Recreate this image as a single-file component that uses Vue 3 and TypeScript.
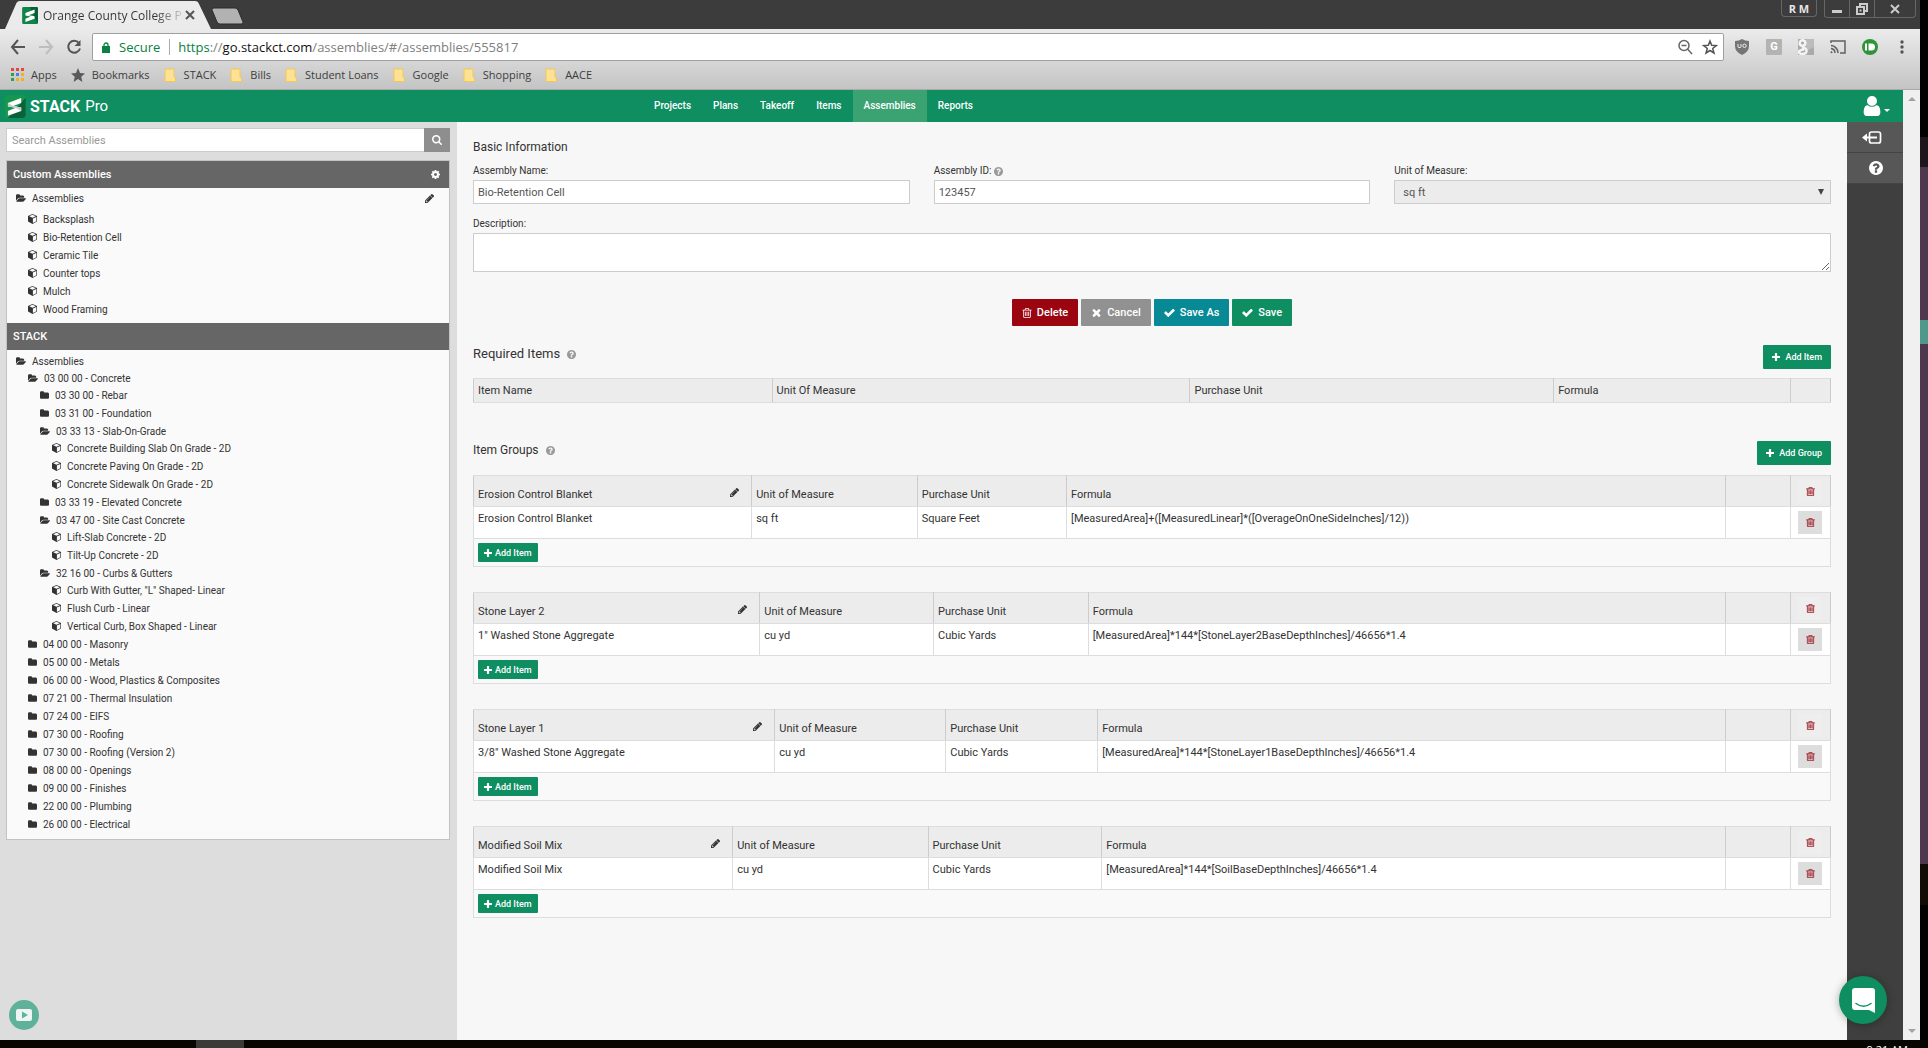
<script setup lang="ts">
import { h, ref } from 'vue'
import type { FunctionalComponent } from 'vue'

interface Glyph {
  box: string
  path: string
}

const glyphs: Record<string, Glyph> = {
  trash: {
    box: '192 128 1408 1536',
    path: 'M704 736v576q0 14-9 23t-23 9h-64q-14 0-23-9t-9-23v-576q0-14 9-23t23-9h64q14 0 23 9t9 23zm256 0v576q0 14-9 23t-23 9h-64q-14 0-23-9t-9-23v-576q0-14 9-23t23-9h64q14 0 23 9t9 23zm256 0v576q0 14-9 23t-23 9h-64q-14 0-23-9t-9-23v-576q0-14 9-23t23-9h64q14 0 23 9t9 23zm128 724v-948h-896v948q0 22 7 40.5t14.5 27 10.5 8.5h832q3 0 10.5-8.5t14.5-27 7-40.5zm-672-1076h448l-48-117q-7-9-17-11h-317q-10 2-17 11zm928 32v64q0 14-9 23t-23 9h-96v948q0 83-47 143.5t-113 60.5h-832q-66 0-113-58.5t-47-141.5v-952h-96q-14 0-23-9t-9-23v-64q0-14 9-23t23-9h309l70-167q15-37 54-63t79-26h320q40 0 79 26t54 63l70 167h309q14 0 23 9t9 23z'
  },
  folder: {
    box: '64 128 1664 1408',
    path: 'M1728 608v704q0 92-66 158t-158 66h-1216q-92 0-158-66t-66-158v-960q0-92 66-158t158-66h320q92 0 158 66t66 158v32h672q92 0 158 66t66 158z'
  },
  folderOpen: {
    box: '0 128 1880 1408',
    path: 'M1879 952q0 31-31 66l-336 396q-43 51-120.5 86.5t-143.5 35.5h-1088q-34 0-60.5-13t-26.5-43q0-31 31-66l336-396q43-51 120.5-86.5t143.5-35.5h1088q34 0 60.5 13t26.5 43zm-343-344v160h-832q-94 0-197 47.5t-164 119.5l-337 396-5 6q0-4-.5-12.5t-.5-12.5v-960q0-92 66-158t158-66h320q92 0 158 66t66 158v32h544q92 0 158 66t66 158z'
  },
  check: {
    box: '121 200 1550 1330',
    path: 'M1671 566q0 40-28 68l-724 724-136 136q-28 28-68 28t-68-28l-136-136-362-362q-28-28-28-68t28-68l136-136q28-28 68-28t68 28l294 295 656-657q28-28 68-28t68 28l136 136q28 28 28 68z'
  },
  times: {
    box: '302 366 1188 1188',
    path: 'M1490 1322q0 40-28 68l-136 136q-28 28-68 28t-68-28l-294-294-294 294q-28 28-68 28t-68-28l-136-136q-28-28-28-68t28-68l294-294-294-294q-28-28-28-68t28-68l136-136q28-28 68-28t68 28l294 294 294-294q28-28 68-28t68 28l136 136q28 28 28 68t-28 68l-294 294 294 294q28 28 28 68z'
  },
  plus: {
    box: '192 128 1408 1408',
    path: 'M1600 736v192q0 40-28 68t-68 28h-416v416q0 40-28 68t-68 28h-192q-40 0-68-28t-28-68v-416h-416q-40 0-68-28t-28-68v-192q0-40 28-68t68-28h416v-416q0-40 28-68t68-28h192q40 0 68 28t28 68v416h416q40 0 68 28t28 68z'
  },
  help: {
    box: '128 128 1536 1536',
    path: 'M1024 1376v-192q0-14-9-23t-23-9h-192q-14 0-23 9t-9 23v192q0 14 9 23t23 9h192q14 0 23-9t9-23zm256-672q0-88-55.5-163t-138.5-116-170-41q-243 0-371 213-15 24 8 42l132 100q7 6 19 6 16 0 25-12 53-68 86-92 34-24 86-24 48 0 85.5 26t37.5 59q0 38-20 61t-68 45q-63 28-115.5 86.5t-52.5 125.5v36q0 14 9 23t23 9h192q14 0 23-9t9-23q0-19 21.5-49.5t54.5-49.5q32-18 49-28.5t46-35 44.5-48 28-60.5 12.5-81zm384 192q0 209-103 385.5t-279.5 279.5-385.5 103-385.5-103-279.5-279.5-103-385.5 103-385.5 279.5-279.5 385.5-103 385.5 103 279.5 279.5 103 385.5z'
  },
  search: {
    box: '64 128 1664 1664',
    path: 'M1216 832q0-185-131.5-316.5t-316.5-131.5-316.5 131.5-131.5 316.5 131.5 316.5 316.5 131.5 316.5-131.5 131.5-316.5zm512 832q0 52-38 90t-90 38q-54 0-90-38l-343-342q-179 124-399 124-143 0-273.5-55.5t-225-150-150-225-55.5-273.5 55.5-273.5 150-225 225-150 273.5-55.5 273.5 55.5 225 150 150 225 55.5 273.5q0 220-124 399l343 343q37 37 37 90z'
  },
  pencil: {
    box: '128 149 1515 1515',
    path: 'M491 1536l91-91-235-235-91 91v107h128v128h107zm523-928q0-22-22-22-10 0-17 7l-542 542q-7 7-7 17 0 22 22 22 10 0 17-7l542-542q7-7 7-17zm-54-192l416 416-832 832h-416v-416zm683 96q0 53-37 90l-166 166-416-416 166-165q36-38 90-38 53 0 91 38l235 234q37 39 37 91z'
  },
  cog: {
    box: '128 128 1536 1536',
    path: 'M1152 896q0-106-75-181t-181-75-181 75-75 181 75 181 181 75 181-75 75-181zm512-109v222q0 12-8 23t-20 13l-185 28q-19 54-39 91 35 50 107 138 10 12 10 25t-9 23q-27 37-99 108t-94 71q-12 0-26-9l-138-108q-44 23-91 38-16 136-29 186-7 28-36 28h-222q-14 0-24.5-8.5t-11.5-21.5l-28-184q-49-16-90-37l-141 107q-10 9-25 9-14 0-25-11-126-114-165-168-7-10-7-23 0-12 8-23 15-21 51-66.5t54-70.5q-27-50-41-99l-183-27q-13-2-21-12.5t-8-23.5v-222q0-12 8-23t19-13l186-28q14-46 39-92-40-57-107-138-10-12-10-24 0-10 9-23 26-36 98.5-107.5t94.5-71.5q13 0 26 10l138 107q44-23 91-38 16-136 29-186 7-28 36-28h222q14 0 24.5 8.5t11.5 21.5l28 184q49 16 90 37l142-107q9-9 24-9 13 0 25 10 129 119 165 170 7 8 7 22 0 12-8 23-15 21-51 66.5t-54 70.5q26 50 41 98l183 28q13 2 21 12.5t8 23.5z'
  },
  user: {
    box: '256 128 1280 1536',
    path: 'M1536 1399q0 109-62.5 187t-150.5 78h-854q-88 0-150.5-78t-62.5-187q0-85 8.5-160.5t31.5-152 58.5-131 94-89 134.5-34.5q131 128 313 128t313-128q76 0 134.5 34.5t94 89 58.5 131 31.5 152 8.5 160.5zm-256-887q0 159-112.5 271.5t-271.5 112.5-271.5-112.5-112.5-271.5 112.5-271.5 271.5-112.5 271.5 112.5 112.5 271.5z'
  },
  cube: {
    box: '0 0 18 20',
    path: 'M9 0L18 4V15L9 20L0 15V4ZM9 1.500L2.500 4.500L9 7.500L15.500 4.500ZM9.800 9V18L16.700 14.300V6Z'
  }
}

const Icon: FunctionalComponent<{ name: string }> = (props) =>
  h('svg', { viewBox: glyphs[props.name].box, fill: 'currentColor', 'aria-hidden': 'true' }, [
    h('path', { d: glyphs[props.name].path, 'fill-rule': props.name === 'cube' ? 'evenodd' : 'nonzero' })
  ])
Icon.props = ['name']

const bookmarks = ['STACK', 'Bills', 'Student Loans', 'Google', 'Shopping', 'AACE']
const navItems = ['Projects', 'Plans', 'Takeoff', 'Items', 'Assemblies', 'Reports']
const current = ref('Assemblies')

const customAssemblies = ['Backsplash', 'Bio-Retention Cell', 'Ceramic Tile', 'Counter tops', 'Mulch', 'Wood Framing']

interface TreeRow {
  level: number
  icon: 'folder' | 'folderOpen' | 'cube'
  label: string
}

const open = (level: number, label: string): TreeRow => ({ level, icon: 'folderOpen', label })
const closed = (level: number, label: string): TreeRow => ({ level, icon: 'folder', label })
const leaf = (label: string): TreeRow => ({ level: 3, icon: 'cube', label })

const tree: TreeRow[] = [
  open(0, 'Assemblies'),
  open(1, '03 00 00 - Concrete'),
  closed(2, '03 30 00 - Rebar'),
  closed(2, '03 31 00 - Foundation'),
  open(2, '03 33 13 - Slab-On-Grade'),
  leaf('Concrete Building Slab On Grade - 2D'),
  leaf('Concrete Paving On Grade - 2D'),
  leaf('Concrete Sidewalk On Grade - 2D'),
  closed(2, '03 33 19 - Elevated Concrete'),
  open(2, '03 47 00 - Site Cast Concrete'),
  leaf('Lift-Slab Concrete - 2D'),
  leaf('Tilt-Up Concrete - 2D'),
  open(2, '32 16 00 - Curbs & Gutters'),
  leaf('Curb With Gutter, "L" Shaped- Linear'),
  leaf('Flush Curb - Linear'),
  leaf('Vertical Curb, Box Shaped - Linear'),
  closed(1, '04 00 00 - Masonry'),
  closed(1, '05 00 00 - Metals'),
  closed(1, '06 00 00 - Wood, Plastics & Composites'),
  closed(1, '07 21 00 - Thermal Insulation'),
  closed(1, '07 24 00 - EIFS'),
  closed(1, '07 30 00 - Roofing'),
  closed(1, '07 30 00 - Roofing (Version 2)'),
  closed(1, '08 00 00 - Openings'),
  closed(1, '09 00 00 - Finishes'),
  closed(1, '22 00 00 - Plumbing'),
  closed(1, '26 00 00 - Electrical')
]

const startsBranch = (i: number) => i > 0 && tree[i].level > tree[i - 1].level

interface Group {
  name: string
  item: string
  unit: string
  purchase: string
  formula: string
  shares: number[]
}

// shares: column widths as a percentage of the table, formula takes the rest
const groups: Group[] = [
  {
    name: 'Erosion Control Blanket',
    item: 'Erosion Control Blanket',
    unit: 'sq ft',
    purchase: 'Square Feet',
    formula: '[MeasuredArea]+([MeasuredLinear]*([OverageOnOneSideInches]/12))',
    shares: [20.5, 12.2, 11]
  },
  {
    name: 'Stone Layer 2',
    item: '1" Washed Stone Aggregate',
    unit: 'cu yd',
    purchase: 'Cubic Yards',
    formula: '[MeasuredArea]*144*[StoneLayer2BaseDepthInches]/46656*1.4',
    shares: [21.1, 12.8, 11.4]
  },
  {
    name: 'Stone Layer 1',
    item: '3/8" Washed Stone Aggregate',
    unit: 'cu yd',
    purchase: 'Cubic Yards',
    formula: '[MeasuredArea]*144*[StoneLayer1BaseDepthInches]/46656*1.4',
    shares: [22.2, 12.6, 11.2]
  },
  {
    name: 'Modified Soil Mix',
    item: 'Modified Soil Mix',
    unit: 'cu yd',
    purchase: 'Cubic Yards',
    formula: '[MeasuredArea]*144*[SoilBaseDepthInches]/46656*1.4',
    shares: [19.1, 14.4, 12.8]
  }
]

const assemblyName = ref('Bio-Retention Cell')
const assemblyId = ref('123457')
const description = ref('')
const query = ref('')
</script>

<template>
  <div class="desktop">
    <div class="browser">
      <div class="titlebar">
        <div class="tab">
          <svg class="tab-shape" viewBox="0 0 206 28" preserveAspectRatio="none" aria-hidden="true">
            <path d="M0 28L11 3Q12 0 15 0H190Q193 0 194 3L206 28Z" fill="#ebebeb" />
          </svg>
          <svg class="favicon" viewBox="0 0 24 26" aria-hidden="true">
            <rect width="24" height="26" rx="2" fill="#0e8446" />
            <path d="M12 0H22Q24 0 24 2V26Z" fill="#0a5c35" />
            <path d="M5 9L19 4V9L10 12.500L19 14V18L5 23V18L13 14.500L5 13Z" fill="#fff" />
          </svg>
          <span class="tab-title">Orange County College P</span>
          <button class="tab-close" type="button" aria-label="Close tab">
            <svg viewBox="0 0 10 10" aria-hidden="true"><path d="M1 1L9 9M9 1L1 9" stroke="#555" stroke-width="2" /></svg>
          </button>
        </div>
        <button class="new-tab" type="button" aria-label="New tab">
          <svg viewBox="0 0 34 18" aria-hidden="true">
            <path d="M3 1H24Q26 1 27 3L32 15Q33 17 30 17H9Q7 17 6 15L1 3Q0 1 3 1Z" fill="#b2b2b2" stroke="#2b2b2b" />
          </svg>
        </button>
        <div class="window-controls">
          <button class="wc profile" type="button">R M</button>
          <div class="wc-group">
            <button class="wc" type="button" aria-label="Minimize">
              <svg viewBox="0 0 12 12" aria-hidden="true"><rect x="1" y="7" width="10" height="3" fill="#ccc" /></svg>
            </button>
            <button class="wc" type="button" aria-label="Restore">
              <svg viewBox="0 0 12 12" fill="none" stroke="#ccc" stroke-width="2" aria-hidden="true">
                <path d="M4 3V1H11V8H9" /><rect x="1" y="4" width="7" height="7" /><rect x="4" y="7" width="1" height="1" stroke-width="1" />
              </svg>
            </button>
            <button class="wc wide" type="button" aria-label="Close">
              <svg viewBox="0 0 12 12" aria-hidden="true"><path d="M2 2L10 10M10 2L2 10" stroke="#ccc" stroke-width="2" /></svg>
            </button>
          </div>
        </div>
      </div>

      <div class="chrome">
        <div class="toolbar">
          <div class="history">
            <button type="button" aria-label="Back">
              <svg viewBox="0 0 16 16" fill="none" stroke="#555" stroke-width="2" aria-hidden="true"><path d="M15 8H2M8 1L2 8L8 15" /></svg>
            </button>
            <button type="button" aria-label="Forward">
              <svg viewBox="0 0 16 16" fill="none" stroke="#bdbdbd" stroke-width="2" aria-hidden="true"><path d="M1 8H14M8 1L14 8L8 15" /></svg>
            </button>
            <button type="button" aria-label="Reload">
              <svg viewBox="0 0 16 16" fill="none" stroke="#555" stroke-width="2" aria-hidden="true">
                <path d="M13 4A6 6 0 1 0 14 9.500" /><path d="M14.500 1V7H8.500Z" fill="#555" stroke="none" />
              </svg>
            </button>
          </div>
          <div class="address">
            <svg class="lock" viewBox="0 0 8 11" aria-hidden="true">
              <rect y="4" width="8" height="7" fill="#0b8043" /><path d="M2 5V3A2 2 0 0 1 6 3V5" fill="none" stroke="#0b8043" stroke-width="1.300" />
            </svg>
            <span class="secure">Secure</span>
            <span class="divider"></span>
            <span class="url"><span class="scheme">https</span>://<span class="host">go.stackct.com</span>/assemblies/#/assemblies/555817</span>
            <svg class="addr-icon" viewBox="0 0 16 16" fill="none" stroke="#666" stroke-width="1.500" aria-hidden="true">
              <circle cx="7" cy="6.500" r="5" /><path d="M4.500 6.500H9.500M10.500 10L15 15" />
            </svg>
            <svg class="addr-icon" viewBox="0 0 16 16" fill="none" stroke="#555" stroke-width="1.500" aria-hidden="true">
              <path d="M8 2L9.700 6.300L14.300 6.600L10.700 9.500L12 14L8 11.500L4 14L5.300 9.500L1.700 6.600L6.300 6.300Z" />
            </svg>
          </div>
          <div class="extensions">
            <svg viewBox="0 0 16 16" aria-hidden="true">
              <path d="M8 0Q11 2 15 2V7Q15 13 8 16Q1 13 1 7V2Q5 2 8 0Z" fill="#757575" />
              <path d="M4 5V7.500Q4 8.500 5 8.500H6Q7 8.500 7 7.500V5" fill="none" stroke="#eee" /><circle cx="10.500" cy="6.800" r="1.700" fill="none" stroke="#eee" />
            </svg>
            <span class="ext-letter">G</span>
            <svg viewBox="0 0 16 16" aria-hidden="true">
              <rect width="16" height="16" rx="1" fill="#a9a9a9" /><path d="M8 0H15Q16 0 16 1V8L8 12Z" fill="#bcbcbc" />
              <g fill="none" stroke="#f4f4f4" stroke-width="2.500"><circle cx="4.500" cy="4" r="2.800" /><path d="M4 8Q9 9.500 8.500 12.500Q8 15 4.500 15T1 12.500Q1.500 11 6 10.500" /></g>
            </svg>
            <svg viewBox="0 0 16 16" fill="none" stroke="#616161" stroke-width="1.500" aria-hidden="true">
              <path d="M1 4V2H15V14H10M1 6.500A7.500 7.500 0 0 1 8 14M1 9.500A4.500 4.500 0 0 1 5 14" /><circle cx="1.500" cy="13.200" r="1" fill="#616161" stroke="none" />
            </svg>
            <svg viewBox="0 0 16 16" aria-hidden="true">
              <circle cx="8" cy="8" r="8" fill="#2d9438" /><rect x="3" y="4.500" width="2" height="7" fill="#fff" />
              <path d="M6.500 4.500H9.500A3.500 3.500 0 0 1 9.500 11.500H6.500Z" fill="#fff" />
            </svg>
            <svg viewBox="0 0 16 16" fill="#555" aria-hidden="true"><circle cx="8" cy="3" r="1.700" /><circle cx="8" cy="8" r="1.700" /><circle cx="8" cy="13" r="1.700" /></svg>
          </div>
        </div>
        <nav class="bookmarks" aria-label="Bookmarks">
          <a href="#">
            <svg class="apps" viewBox="0 0 13 13" aria-hidden="true">
              <path d="M0 0h3v3H0zM5 0h3v3H5zM10 0h3v3h-3z" fill="#e8453c" />
              <path d="M0 5h3v3H0zM0 10h3v3H0z" fill="#2e9e4f" /><path d="M5 5h3v3H5z" fill="#3f83f0" />
              <path d="M10 5h3v3h-3zM5 10h3v3H5zM10 10h3v3h-3z" fill="#f6b01c" />
            </svg>Apps
          </a>
          <a href="#">
            <svg class="star" viewBox="0 0 14 14" aria-hidden="true"><path d="M7 0L9 5L14 5.400L10.200 8.700L11.400 14L7 11L2.600 14L3.800 8.700L0 5.400L5 5Z" fill="#595959" /></svg>Bookmarks
          </a>
          <a v-for="mark in bookmarks" :key="mark" href="#" class="folder-mark">
            <svg viewBox="0 0 12 14" aria-hidden="true"><path d="M1 1H10V9L11.500 10V13.500H1Z" fill="#fde293" stroke="#f0c858" /></svg>{{ mark }}
          </a>
        </nav>
      </div>

      <div class="viewport">
        <div class="page">
          <header class="app-header">
            <a class="brand" href="#">
              <svg viewBox="0 0 24 26" aria-hidden="true">
                <rect width="24" height="26" rx="4" fill="#14984f" />
                <path d="M24 3V22Q24 26 20 26H4Z" fill="#0a6238" />
                <path d="M4 9L19 3.500V9L10 12.500L19 14V18L4 23.500V18L13 14.500L4 13Z" fill="#fff" />
                <path d="M4 9L10 12.500L19 14V18L13 14.500L4 13Z" fill="#c9cdd0" />
              </svg>
              <span class="word">STACK</span>
              <span class="pro">Pro</span>
            </a>
            <nav class="main-nav" aria-label="Main">
              <a v-for="item in navItems" :key="item" href="#" :class="{ active: item === current }" @click.prevent="current = item">{{ item }}</a>
            </nav>
            <button class="account" type="button" aria-label="Account">
              <Icon name="user" class="user-icon" /><span class="caret"></span>
            </button>
          </header>

          <div class="body">
            <aside class="sidebar">
              <form class="search" @submit.prevent>
                <input v-model="query" type="text" placeholder="Search Assemblies" aria-label="Search Assemblies" />
                <button type="submit" aria-label="Search"><Icon name="search" class="i10" /></button>
              </form>
              <div class="panel">
                <h2 class="panel-head">
                  Custom Assemblies
                  <button type="button" aria-label="Settings"><Icon name="cog" class="i9" /></button>
                </h2>
                <div class="custom">
                  <div class="row root">
                    <Icon name="folderOpen" class="row-open" />Assemblies
                    <button class="edit" type="button" aria-label="Edit assemblies"><Icon name="pencil" class="i9" /></button>
                  </div>
                  <ul>
                    <li v-for="name in customAssemblies" :key="name" class="row level-1"><Icon name="cube" class="row-icon" />{{ name }}</li>
                  </ul>
                </div>
                <h2 class="panel-head">STACK</h2>
                <ul class="catalog">
                  <li
                    v-for="(row, i) in tree"
                    :key="row.label"
                    class="row"
                    :class="['level-' + row.level, { branch: startsBranch(i) }]"
                  >
                    <Icon :name="row.icon" :class="row.icon === 'folderOpen' ? 'row-open' : row.icon === 'cube' ? 'row-icon' : 'row-closed'" />{{ row.label }}
                  </li>
                </ul>
              </div>
              <button class="video" type="button" aria-label="Watch video">
                <svg viewBox="0 0 16 12" aria-hidden="true"><rect width="16" height="12" rx="2" fill="#eef4f2" /><path d="M6 2.500L12 6L6 9.500Z" fill="#5fb299" /></svg>
              </button>
            </aside>

            <main class="content">
              <h3 class="section-title">Basic Information</h3>
              <div class="fields">
                <div class="field">
                  <label for="assembly-name">Assembly Name:</label>
                  <input id="assembly-name" v-model="assemblyName" type="text" />
                </div>
                <div class="field">
                  <label for="assembly-id">Assembly ID: <Icon name="help" class="help" /></label>
                  <input id="assembly-id" v-model="assemblyId" type="text" />
                </div>
                <div class="field">
                  <label for="unit">Unit of Measure:</label>
                  <div class="select-wrap">
                    <select id="unit"><option>sq ft</option></select>
                    <svg viewBox="0 0 6 6" aria-hidden="true"><path d="M0 0H6L3 6Z" fill="#444" /></svg>
                  </div>
                </div>
              </div>
              <div class="field description">
                <label for="description">Description:</label>
                <textarea id="description" v-model="description"></textarea>
              </div>

              <div class="actions">
                <button class="btn danger" type="button"><Icon name="trash" class="i10" />Delete</button>
                <button class="btn muted" type="button"><Icon name="times" class="i-times" />Cancel</button>
                <button class="btn teal" type="button"><Icon name="check" class="i-check" />Save As</button>
                <button class="btn green" type="button"><Icon name="check" class="i-check" />Save</button>
              </div>

              <div class="section-head">
                <h3 class="large">Required Items <Icon name="help" class="help" /></h3>
                <button class="btn green small" type="button"><Icon name="plus" class="i8" />Add Item</button>
              </div>
              <table class="required">
                <colgroup>
                  <col class="r-name" /><col class="r-unit" /><col class="r-purchase" /><col /><col class="c-trash" />
                </colgroup>
                <thead>
                  <tr><th>Item Name</th><th>Unit Of Measure</th><th>Purchase Unit</th><th>Formula</th><th></th></tr>
                </thead>
              </table>

              <div class="section-head groups-head">
                <h3>Item Groups <Icon name="help" class="help" /></h3>
                <button class="btn green small" type="button"><Icon name="plus" class="i8" />Add Group</button>
              </div>
              <table v-for="group in groups" :key="group.name" class="group">
                <colgroup>
                  <col v-for="(share, i) in group.shares" :key="i" :style="{ width: share + '%' }" />
                  <col /><col class="c-extra" /><col class="c-trash" />
                </colgroup>
                <thead>
                  <tr>
                    <th>
                      <div class="group-name">
                        {{ group.name }}
                        <button type="button" aria-label="Rename group"><Icon name="pencil" class="i9" /></button>
                      </div>
                    </th>
                    <th>Unit of Measure</th>
                    <th>Purchase Unit</th>
                    <th>Formula</th>
                    <th></th>
                    <th class="tool"><button type="button" aria-label="Delete group"><Icon name="trash" class="i9" /></button></th>
                  </tr>
                </thead>
                <tbody>
                  <tr>
                    <td>{{ group.item }}</td>
                    <td>{{ group.unit }}</td>
                    <td>{{ group.purchase }}</td>
                    <td>{{ group.formula }}</td>
                    <td></td>
                    <td class="tool"><button type="button" aria-label="Delete item"><Icon name="trash" class="i9" /></button></td>
                  </tr>
                </tbody>
                <tfoot>
                  <tr>
                    <td colspan="6"><button class="btn green tiny" type="button"><Icon name="plus" class="i8" />Add Item</button></td>
                  </tr>
                </tfoot>
              </table>
            </main>

            <aside class="rail">
              <button type="button" aria-label="Collapse">
                <svg viewBox="0 0 20 13" aria-hidden="true">
                  <rect x="7.500" y="1" width="11" height="11" rx="2" fill="none" stroke="#fff" stroke-width="1.700" />
                  <path d="M0 6.500L5 2.500V5.500H15V7.500H5V10.500Z" fill="#fff" />
                </svg>
              </button>
              <button type="button" aria-label="Help"><Icon name="help" class="i14" /></button>
            </aside>
          </div>
          <button class="chat" type="button" aria-label="Open chat">
            <svg viewBox="0 0 23 25" aria-hidden="true">
              <path d="M3 0H20Q23 0 23 3V25L17 22H3Q0 22 0 19V3Q0 0 3 0Z" fill="#fff" />
              <path d="M4 15.500Q11.500 21 19 15.500" fill="none" stroke="#0f8e62" stroke-width="1.500" stroke-linecap="round" />
            </svg>
          </button>
        </div>
        <div class="scrollbar" aria-hidden="true"><span class="up"></span><span class="down"></span></div>
      </div>
    </div>
    <div class="wallpaper" aria-hidden="true"></div>
    <div class="taskbar"><span class="task"></span><span class="clock">9:21 AM</span></div>
  </div>
</template>

<style>
html,
body {
  margin: 0;
  background: #000;
}
</style>

<style scoped>
* {
  box-sizing: border-box;
}

.desktop {
  display: grid;
  grid-template-columns: 1fr 8px;
  grid-template-rows: 1fr 8px;
  min-height: 100vh;
  background: #000;
  color: #333;
  font-family: Roboto, 'Liberation Sans', sans-serif;
  font-size: 12px;
}

button {
  display: flex;
  align-items: center;
  justify-content: center;
  padding: 0;
  border: 0;
  background: none;
  color: inherit;
  font: inherit;
}

a {
  color: inherit;
  text-decoration: none;
}

ul,
h2,
h3 {
  margin: 0;
  padding: 0;
  list-style: none;
}

svg {
  flex: none;
}

.browser {
  display: flex;
  flex-direction: column;
  min-width: 0;
}

.wallpaper {
  background: linear-gradient(
    #000 137px,
    #1d171d 137px 167px,
    #4e384d 167px 320px,
    #50998a 320px 344px,
    #4e384d 344px 864px,
    #100c05 864px 905px,
    #000 905px
  );
}

.taskbar {
  grid-column: 1 / -1;
  display: flex;
  justify-content: space-between;
  height: 8px;
  padding: 0 20px 0 196px;
  overflow: hidden;
  background: #080603;
}

.task {
  width: 48px;
  background: #3c3a38;
}

.clock {
  padding-top: 2px;
  color: #fff;
  font-family: 'Open Sans', sans-serif;
  font-size: 11px;
  line-height: 16px;
}

/* browser frame */
.titlebar {
  display: flex;
  height: 29px;
  padding-left: 5px;
  background: #3c3c3c;
}

.tab {
  position: relative;
  display: flex;
  align-items: center;
  width: 206px;
  height: 28px;
  margin-top: 1px;
  padding: 0 16px 0 17px;
}

.tab-shape {
  position: absolute;
  inset: 0;
  width: 100%;
  height: 100%;
}

.favicon {
  position: relative;
  width: 16px;
  height: 17px;
}

.tab-title {
  position: relative;
  flex: 1;
  margin-left: 5px;
  background: linear-gradient(to right, #333 112px, transparent 144px);
  background-clip: text;
  color: transparent;
  font-family: 'Open Sans', sans-serif;
  font-size: 12px;
  white-space: nowrap;
}

.tab-close {
  position: relative;
  width: 10px;
}

.tab-close svg {
  width: 10px;
  height: 10px;
}

.new-tab {
  align-self: flex-end;
  margin-bottom: 4px;
}

.new-tab svg {
  width: 34px;
  height: 18px;
}

.window-controls {
  display: flex;
  align-items: flex-start;
  gap: 7px;
  margin-left: auto;
  padding-right: 4px;
}

.wc {
  width: 25px;
  height: 17px;
  border-left: 1px solid #666;
  color: #e6e6e6;
}

.wc svg {
  width: 12px;
  height: 12px;
}

.wc.profile {
  width: 36px;
  border: 1px solid #666;
  border-top: 0;
  border-radius: 0 0 4px 4px;
  font-family: 'Open Sans', sans-serif;
  font-size: 11px;
  font-weight: 700;
}

.wc-group {
  display: flex;
  border: 1px solid #666;
  border-top: 0;
  border-left: 0;
  border-radius: 0 0 4px 4px;
}

.wc.wide {
  width: 41px;
}

.chrome {
  height: 61px;
  border-bottom: 1px solid #aaa;
  background: linear-gradient(#ebebeb, #c4c4c4);
  font-family: 'Open Sans', sans-serif;
}

.toolbar {
  display: flex;
  align-items: center;
  height: 28px;
  margin-top: 4px;
}

.history {
  display: flex;
  gap: 12px;
  padding: 0 10px;
}

.history svg {
  width: 16px;
  height: 16px;
}

.address {
  display: flex;
  flex: 1;
  align-items: center;
  height: 28px;
  padding: 0 5px 0 9px;
  border: 1px solid #a0a0a0;
  border-radius: 2px;
  background: #fff;
  font-size: 13px;
}

.lock {
  width: 8px;
  height: 11px;
}

.secure {
  margin-left: 9px;
  color: #0b8043;
}

.divider {
  width: 1px;
  height: 16px;
  margin: 0 8px 0 9px;
  background: #aaa;
}

.url {
  flex: 1;
  color: #808080;
}

.scheme {
  color: #0b8043;
}

.host {
  color: #111;
}

.addr-icon {
  width: 16px;
  height: 16px;
  margin-left: 9px;
}

.extensions {
  display: flex;
  gap: 16px;
  padding: 0 10px;
}

.extensions svg,
.ext-letter {
  width: 16px;
  height: 16px;
}

.ext-letter {
  border-radius: 1px;
  background: #b3b3b3;
  color: #fff;
  font-family: Roboto, sans-serif;
  font-size: 11px;
  font-weight: 700;
  line-height: 16px;
  text-align: center;
}

.bookmarks {
  display: flex;
  align-items: center;
  gap: 14px;
  height: 27px;
  padding-left: 11px;
  color: #3d3d3d;
  font-size: 11px;
}

.bookmarks a {
  display: flex;
  align-items: center;
  gap: 7px;
}

.apps {
  width: 13px;
  height: 13px;
}

.star {
  width: 14px;
  height: 14px;
}

.bookmarks .folder-mark {
  gap: 8px;
}

.folder-mark svg {
  width: 12px;
  height: 14px;
}

.viewport {
  display: flex;
  flex: 1;
}

.scrollbar {
  display: flex;
  flex-direction: column;
  align-items: center;
  justify-content: space-between;
  width: 17px;
  padding: 7px 0;
  background: #f0f0f0;
}

.up,
.down {
  border: 4px solid transparent;
}

.up {
  border-top: 0;
  border-bottom-color: #a3a3a3;
}

.down {
  border-bottom: 0;
  border-top-color: #a3a3a3;
}

/* application */
.page {
  position: relative;
  display: flex;
  flex: 1;
  flex-direction: column;
  min-width: 0;
  background: #f7f7f7;
}

.app-header {
  display: grid;
  grid-template-columns: 643px 1fr auto;
  height: 32px;
  background: #0f8e62;
  color: #fff;
}

.brand {
  display: flex;
  align-items: center;
  padding-left: 4px;
}

.brand svg {
  width: 22px;
  height: 23px;
}

.word {
  margin-left: 4px;
  font-size: 16px;
  font-weight: 700;
}

.pro {
  margin-left: 5px;
  font-size: 15px;
}

.main-nav {
  display: flex;
}

.main-nav a {
  padding: 0 11px;
  font-size: 10px;
  font-weight: 500;
  line-height: 32px;
}

.main-nav a.active {
  background: #3ba271;
}

.account {
  gap: 3px;
  padding: 0 13px 0 0;
}

.user-icon {
  width: 18px;
  height: 20px;
}

.caret {
  margin-top: 8px;
  border: 3px solid transparent;
  border-top-color: #fff;
  border-bottom: 0;
}

.body {
  display: grid;
  flex: 1;
  grid-template-columns: 457px 1fr 56px;
}

.sidebar {
  display: flex;
  flex-direction: column;
  padding: 6px 7px 10px 6px;
  background: #ddd;
}

.search {
  display: flex;
  height: 24px;
}

.search input {
  flex: 1;
  min-width: 0;
  padding: 0 5px;
  border: 1px solid #ccc;
  border-right: 0;
  background: #fff;
  font: inherit;
  font-size: 11px;
}

.search input::placeholder {
  color: #999;
}

.search button {
  width: 26px;
  background: #8e8e8e;
  color: #fff;
}

.panel {
  margin-top: 8px;
  border: 1px solid #c2c2c2;
  background: #fafafa;
}

.panel-head {
  display: flex;
  align-items: center;
  justify-content: space-between;
  height: 27px;
  padding: 0 9px 0 6px;
  background: #666;
  color: #fff;
  font-size: 11px;
  font-weight: 500;
}

.custom {
  padding-bottom: 5px;
}

.row {
  display: flex;
  align-items: center;
  gap: 6px;
  height: 18px;
  padding-left: 9px;
  font-size: 10px;
}

.row.branch {
  margin-top: -1px;
}

.level-1 {
  padding-left: 21px;
}

.level-2 {
  padding-left: 33px;
}

.level-3 {
  padding-left: 45px;
}

.row-open {
  width: 10px;
  height: 8px;
}

.row-closed {
  width: 9px;
  height: 8px;
}

.row-icon {
  width: 9px;
  height: 10px;
}

.custom .root {
  height: 20px;
}

.custom ul {
  padding-top: 2px;
}

.edit {
  margin: 0 15px 0 auto;
}

.catalog {
  padding: 2px 0 6px;
}

.video {
  width: 30px;
  height: 30px;
  margin: auto 0 0 3px;
  border-radius: 50%;
  background: #5fb299;
}

.video svg {
  width: 16px;
  height: 12px;
}

.i8 {
  width: 8px;
  height: 8px;
}

.i9 {
  width: 9px;
  height: 9px;
}

.i10 {
  width: 10px;
  height: 10px;
}

.i14 {
  width: 14px;
  height: 14px;
}

.i-times {
  width: 11px;
  height: 8px;
}

.i-check {
  width: 11px;
  height: 9px;
}

.content {
  min-width: 0;
  padding: 16px;
}

h3 {
  font-size: 12px;
  font-weight: 400;
  line-height: 18px;
}

h3.large {
  font-size: 13px;
}

.help {
  width: 9px;
  height: 9px;
  margin-left: 4px;
  color: #999;
  vertical-align: -1px;
}

.fields {
  display: grid;
  grid-template-columns: repeat(3, 1fr);
  gap: 24px;
  margin-top: 6px;
}

.field {
  display: flex;
  flex-direction: column;
}

.field label {
  font-size: 10px;
  line-height: 18px;
}

.field label .help {
  margin-left: 0;
  vertical-align: -2px;
}

.field input,
.field select,
.field textarea {
  width: 100%;
  height: 24px;
  margin: 0;
  padding: 0 4px;
  border: 1px solid #ccc;
  border-radius: 0;
  background: #fff;
  color: #555;
  font: inherit;
  font-size: 11px;
}

.field select {
  padding: 0 8px;
  background: #ececec;
  appearance: none;
}

.select-wrap {
  position: relative;
}

.select-wrap svg {
  position: absolute;
  top: 9px;
  right: 7px;
  width: 6px;
  height: 6px;
}

.description {
  margin-top: 11px;
}

.field textarea {
  height: 39px;
}

.actions {
  display: flex;
  justify-content: center;
  gap: 3px;
  margin-top: 27px;
}

.btn {
  gap: 5px;
  height: 27px;
  padding: 0 10px;
  border-radius: 1px;
  color: #fff;
  font-size: 11px;
  font-weight: 500;
}

.danger {
  background: #9b0510;
}

.muted {
  background: #919191;
}

.teal {
  background: #088996;
}

.green {
  background: #0f8e62;
}

.btn.small {
  gap: 5px;
  height: 24px;
  padding: 0 9px;
  font-size: 9px;
}

.btn.tiny {
  gap: 3px;
  height: 19px;
  padding: 0 6px;
  font-size: 9px;
}

.section-head {
  display: flex;
  align-items: center;
  justify-content: space-between;
  margin: 19px 0 9px;
}

.section-head h3 {
  margin-bottom: 6px;
}

.section-head.groups-head {
  margin: 38px 0 10px;
}

table {
  width: 100%;
  border-collapse: collapse;
  table-layout: fixed;
  font-size: 11px;
}

th,
td {
  padding: 0 4px;
  border: 1px solid #ddd;
  text-align: left;
}

th {
  border-right-color: #ccc;
  border-left-color: #ccc;
  background: #ececec;
  font-weight: 400;
}

.required th {
  height: 24px;
}

.r-name {
  width: 22%;
}

.r-unit {
  width: 30.8%;
}

.r-purchase {
  width: 26.8%;
}

.group {
  margin-bottom: 25px;
  background: #fff;
}

.group th {
  height: 31px;
  padding-top: 6px;
}

.group tbody td {
  height: 32px;
  padding-bottom: 8px;
}

.group tfoot td {
  height: 28px;
  background: #f9f9f9;
}

.c-extra {
  width: 65px;
}

.c-trash {
  width: 40px;
}

.group-name {
  display: flex;
  justify-content: space-between;
  padding-right: 8px;
}

.group-name button {
  height: 9px;
}

.group .tool,
.group tbody .tool {
  padding: 0 7px;
}

.tool button {
  width: 24px;
  height: 23px;
  background: #eee;
  color: #a93a42;
}

.tool svg {
  stroke: currentColor;
  stroke-width: 60px;
}

td.tool button {
  background: #ddd;
}

.rail {
  background: #3f3f3f;
}

.rail button {
  width: 100%;
  height: 31px;
  border-bottom: 1px solid #444;
  background: #575757;
  color: #fff;
}

.rail svg {
  margin-left: 2px;
}

.rail button:first-child svg {
  width: 20px;
  height: 13px;
  margin-left: -6px;
}

.chat {
  position: absolute;
  right: 16px;
  bottom: 16px;
  width: 48px;
  height: 48px;
  border-radius: 50%;
  background: #0f8e62;
  box-shadow: 0 1px 8px rgba(0, 0, 0, 0.3);
}

.chat svg {
  width: 23px;
  height: 25px;
}
</style>
